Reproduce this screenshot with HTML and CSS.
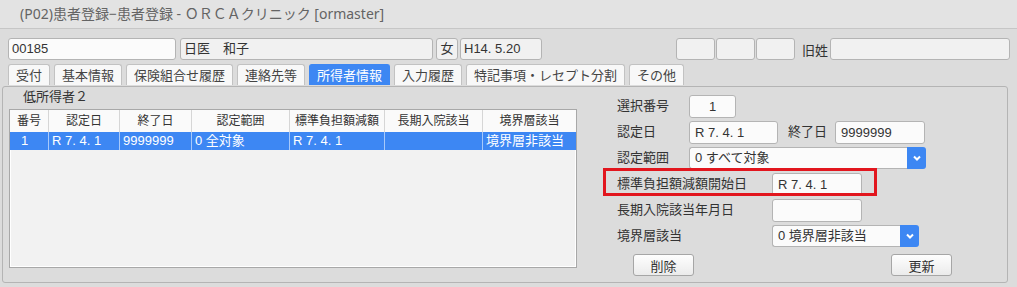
FILE: index.html
```html
<!DOCTYPE html>
<html lang="ja">

<head>
    <meta charset="UTF-8">
    <meta name="viewport" content="width=device-width, initial-scale=1.0">
    <title>患者登録</title>
    <link rel="stylesheet" href="styles.css">
</head>

<body>
    <div class="titlebar">(P02)患者登録−患者登録 - ＯＲＣＡクリニック [ormaster]</div>

    <div class="patient">
        <div class="field id">00185</div>
        <div class="field ro name">日医　和子</div>
        <div class="field ro sex">女</div>
        <div class="field ro birth">H14. 5.20</div>
        <div class="boxes">
            <div class="field ro small"></div>
            <div class="field ro small"></div>
            <div class="field ro small"></div>
        </div>
        <span class="label old-label">旧姓</span>
        <div class="field ro old-name"></div>
    </div>

    <div class="tabs">
        <span class="tab">受付</span>
        <span class="tab">基本情報</span>
        <span class="tab">保険組合せ履歴</span>
        <span class="tab">連絡先等</span>
        <span class="tab active">所得者情報</span>
        <span class="tab">入力履歴</span>
        <span class="tab">特記事項・レセプト分割</span>
        <span class="tab">その他</span>
    </div>

    <div class="panel">
        <div class="list-side">
            <p class="group-title">低所得者２</p>
            <div class="listbox">
                <div class="list-row head">
                    <span class="cell">番号</span>
                    <span class="cell">認定日</span>
                    <span class="cell">終了日</span>
                    <span class="cell">認定範囲</span>
                    <span class="cell">標準負担額減額</span>
                    <span class="cell">長期入院該当</span>
                    <span class="cell">境界層該当</span>
                </div>
                <div class="list-row selected">
                    <span class="cell num">1</span>
                    <span class="cell">R 7. 4. 1</span>
                    <span class="cell">9999999</span>
                    <span class="cell">0 全対象</span>
                    <span class="cell">R 7. 4. 1</span>
                    <span class="cell"></span>
                    <span class="cell">境界層非該当</span>
                </div>
            </div>
        </div>

        <div class="form">
            <div class="row">
                <span class="label short">選択番号</span>
                <div class="field input select-no">1</div>
            </div>
            <div class="row">
                <span class="label short">認定日</span>
                <div class="field input date">R 7. 4. 1</div>
                <span class="label end-label">終了日</span>
                <div class="field input end-date">9999999</div>
            </div>
            <div class="row">
                <span class="label short">認定範囲</span>
                <div class="combo wide">
                    <div class="combo-text">0 すべて対象</div>
                    <div class="combo-btn">
                        <svg width="8" height="6" viewBox="0 0 8 6"><polyline points="1,1.5 4,4.5 7,1.5" fill="none" stroke="#fff" stroke-width="2"/></svg>
                    </div>
                </div>
            </div>
            <div class="row">
                <span class="label long">標準負担額減額開始日</span>
                <div class="field input date2">R 7. 4. 1</div>
            </div>
            <div class="row">
                <span class="label long">長期入院該当年月日</span>
                <div class="field input date2"></div>
            </div>
            <div class="row">
                <span class="label long">境界層該当</span>
                <div class="combo narrow">
                    <div class="combo-text">0 境界層非該当</div>
                    <div class="combo-btn">
                        <svg width="8" height="6" viewBox="0 0 8 6"><polyline points="1,1.5 4,4.5 7,1.5" fill="none" stroke="#fff" stroke-width="2"/></svg>
                    </div>
                </div>
            </div>
            <div class="buttons">
                <button class="button">削除</button>
                <button class="button">更新</button>
            </div>
            <span class="highlight"></span>
        </div>
    </div>
</body>

</html>
```

FILE: styles.css
```css
:root {
    --background-color: #dcdcdc;
    --title-color: #e3e3e3;
    --text-color: #333;
    --border-color: #b4b4b4;
    --field-color: #fbfbfb;
    --readonly-color: #f1f1f1;
    --accent-color: #3d87f3;
    --mark-color: #e2161e;
}

html,
body {
    margin: 0;
    height: 100%;
    overflow: hidden;
    font-family: "Liberation Sans", "Noto Sans CJK JP", sans-serif;
    font-size: 13px;
    color: var(--text-color);
    background-color: var(--background-color);
}

.titlebar {
    height: 28px;
    line-height: 28px;
    padding-left: 20px;
    font-family: "Noto Sans", "Noto Sans CJK JP", sans-serif;
    font-size: 14px;
    color: #646464;
    background-color: var(--title-color);
    border-bottom: 1px solid #c6c6c6;
}

.field {
    box-sizing: border-box;
    height: 22px;
    line-height: 20px;
    padding: 0 3px;
    background-color: var(--field-color);
    border: 1px solid var(--border-color);
    border-radius: 3px;
    white-space: nowrap;
    overflow: hidden;
}

.field.ro {
    background-color: var(--readonly-color);
}

.patient {
    display: flex;
    align-items: center;
    padding: 9px 0 0 8px;
}

.patient .id {
    width: 168px;
}

.patient .name {
    width: 253px;
    margin-left: 4px;
}

.patient .sex {
    width: 22px;
    margin-left: 3px;
    padding: 0;
    text-align: center;
}

.patient .birth {
    width: 82px;
    margin-left: 2px;
}

.patient .boxes {
    display: flex;
    gap: 1px;
    margin-left: 134px;
}

.patient .small {
    width: 39px;
}

.patient .old-label {
    width: 26px;
    margin-left: 7px;
}

.patient .old-name {
    width: 180px;
    margin-left: 2px;
}

.tabs {
    display: flex;
    gap: 4px;
    margin-top: 4px;
    padding-left: 8px;
}

.tabs .tab {
    height: 21px;
    line-height: 21px;
    padding: 0 7px;
    color: #444;
    background-color: #f8f8f8;
    border: 1px solid #c2c2c2;
    border-bottom: none;
    border-radius: 3px 3px 0 0;
    box-sizing: border-box;
}

.tabs .tab.active {
    color: #fff;
    background-color: var(--accent-color);
    border-color: var(--accent-color);
}

.panel {
    display: flex;
    margin: 1px 9px 0 2px;
    border: 1px solid var(--border-color);
    border-radius: 3px;
}

.list-side {
    padding-left: 6px;
}

.group-title {
    margin: 2px 0 4px 14px;
    line-height: 16px;
}

.listbox {
    box-sizing: border-box;
    width: 568px;
    height: 159px;
    background-color: #f2f2f2;
    border: 1px solid #a8a8a8;
    box-shadow: inset 0 0 0 1px #fff;
}

.list-row {
    display: grid;
    grid-template-columns: 38px 71px 72px 98px 95px 98px 94px;
}

.list-row .cell {
    padding: 0 3px;
    white-space: nowrap;
    overflow: hidden;
}

.list-row .cell + .cell {
    border-left: 1px solid #d6d6d6;
}

.list-row.head {
    height: 22px;
    line-height: 22px;
    font-size: 12px;
    background-color: #fafafa;
}

.list-row.head .cell {
    text-align: center;
}

.list-row.selected {
    height: 18px;
    line-height: 18px;
    color: #fff;
    background-color: var(--accent-color);
}

.list-row.selected .cell + .cell {
    border-left-color: rgba(255, 255, 255, 0.55);
}

.list-row .num {
    padding-left: 11px;
}

.form {
    position: relative;
    display: flex;
    flex-direction: column;
    gap: 3px;
    margin-left: 40px;
    padding: 8px 0 6px;
}

.form .row {
    display: flex;
    align-items: flex-start;
    height: 23px;
}

.form .label {
    line-height: 21px;
}

.form .label.short {
    width: 72px;
}

.form .label.long {
    width: 155px;
}

.form .label.end-label {
    width: 47px;
    margin-left: 10px;
}

.form .input {
    height: 23px;
    line-height: 21px;
    padding: 0 5px;
}

.form .select-no {
    width: 47px;
    text-align: center;
}

.form .date {
    width: 89px;
}

.form .end-date,
.form .date2 {
    width: 90px;
}

.combo {
    display: flex;
    height: 22px;
}

.combo.wide {
    width: 237px;
}

.combo.narrow {
    width: 147px;
}

.combo .combo-text {
    flex: 1;
    box-sizing: border-box;
    line-height: 20px;
    padding: 0 5px;
    background-color: var(--field-color);
    border: 1px solid var(--border-color);
    border-right: none;
    border-radius: 3px 0 0 3px;
}

.combo .combo-btn {
    display: flex;
    align-items: center;
    justify-content: center;
    width: 19px;
    background-color: var(--accent-color);
    border-radius: 0 3px 3px 0;
}

.buttons {
    display: flex;
    justify-content: space-between;
    width: 319px;
    margin: 3px 0 0 16px;
}

.button {
    width: 61px;
    height: 22px;
    padding: 0;
    font-family: inherit;
    font-size: 13px;
    color: var(--text-color);
    background: linear-gradient(#fefefe, #ebebeb);
    border: 1px solid #a6a6a6;
    border-radius: 3px;
}

.highlight {
    position: absolute;
    left: -14px;
    top: 81px;
    width: 274px;
    height: 28px;
    box-sizing: border-box;
    border: 3px solid var(--mark-color);
}
```
